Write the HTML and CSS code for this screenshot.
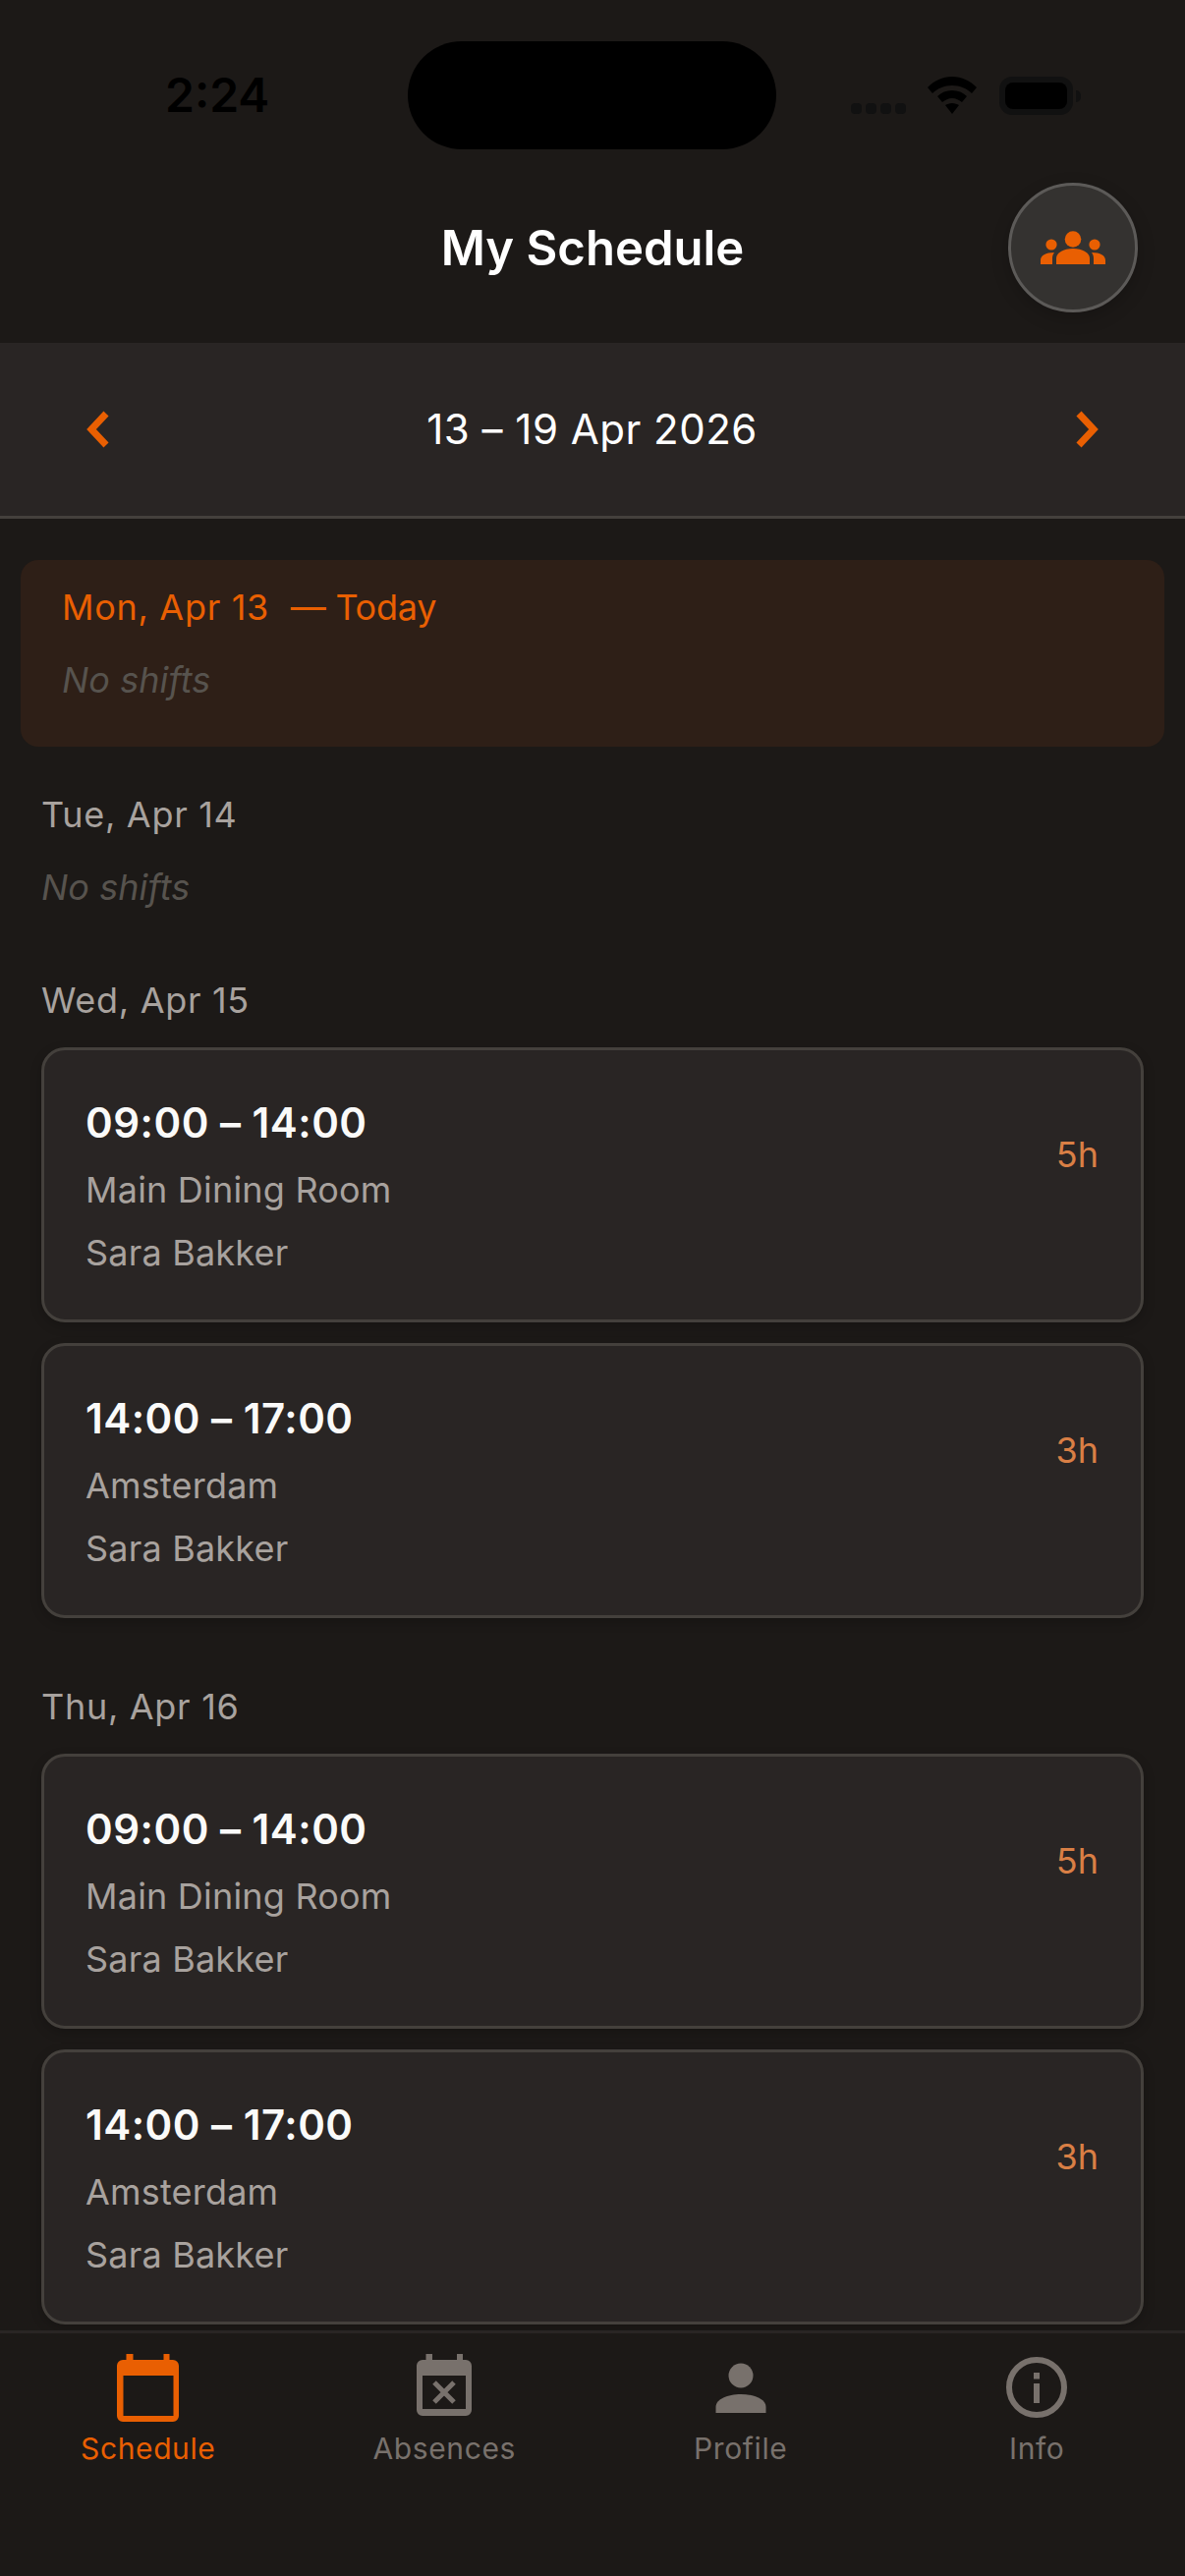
FILE: index.html
```html
<!DOCTYPE html>
<html lang="en">
<head>
    <meta charset="UTF-8">
    <meta name="viewport" content="width=device-width, initial-scale=1.0">
    <title>My Schedule</title>
    <link rel="stylesheet" href="styles.css">
</head>
<body>
    <div class="app">
        <div class="status-bar">
            <span class="status-time">2:24</span>
            <div class="island"></div>
            <div class="status-icons">
                <div class="signal-dots"><i></i><i></i><i></i><i></i></div>
                <svg class="wifi-icon" width="50" height="38" viewBox="0 0 50 38">
                    <path d="M25 0C15 0 7 4 0 11l5 6c5-5 12-8 20-8s15 3 20 8l5-6C43 4 35 0 25 0z"/>
                    <path d="M25 14c-6 0-11 2-15 6l5 6c3-2 6-4 10-4s7 2 10 4l5-6c-4-4-9-6-15-6z"/>
                    <path d="M25 27c-3 0-5 1-7 2l7 9 7-9c-2-1-4-2-7-2z"/>
                </svg>
                <div class="battery"><div class="battery-fill"></div></div>
                <div class="battery-nib"></div>
            </div>
        </div>

        <header class="header">
            <div></div>
            <h1 class="title">My Schedule</h1>
            <button class="team-button">
                <svg width="66" height="34" viewBox="0 0 66 34" fill="#e95f02">
                    <circle cx="33" cy="8.500" r="8.300"/>
                    <circle cx="11" cy="14" r="5.600"/>
                    <circle cx="55" cy="14" r="5.600"/>
                    <path d="M16 34v-6c0-6 8-10 17-10s17 4 17 10v6z"/>
                    <path d="M0 34v-4c0-5 5-8 14-8-1.500 2-2 4-2 6v6z"/>
                    <path d="M66 34v-4c0-5-5-8-14-8 1.500 2 2 4 2 6v6z"/>
                </svg>
            </button>
        </header>

        <div class="week-bar">
            <svg class="chevron" width="32" height="44" viewBox="0 0 32 44">
                <path d="M28 6L13 22l15 16" fill="none" stroke="#e95f02" stroke-width="7"/>
            </svg>
            <span class="week-label">13 – 19 Apr 2026</span>
            <svg class="chevron" width="32" height="44" viewBox="0 0 32 44">
                <path d="M5 6l15 16L5 38" fill="none" stroke="#e95f02" stroke-width="7"/>
            </svg>
        </div>

        <main class="schedule">
            <section class="day day-today">
                <div class="day-label">Mon, Apr 13&nbsp; <span class="today-tag">— Today</span></div>
                <div class="no-shifts">No shifts</div>
            </section>

            <section class="day">
                <div class="day-label">Tue, Apr 14</div>
                <div class="no-shifts">No shifts</div>
            </section>

            <section class="day">
                <div class="day-label">Wed, Apr 15</div>
                <div class="shift-card">
                    <div class="shift-info">
                        <div class="shift-time">09:00 – 14:00</div>
                        <div class="shift-line">Main Dining Room</div>
                        <div class="shift-line">Sara Bakker</div>
                    </div>
                    <div class="shift-hours">5h</div>
                </div>
                <div class="shift-card">
                    <div class="shift-info">
                        <div class="shift-time">14:00 – 17:00</div>
                        <div class="shift-line">Amsterdam</div>
                        <div class="shift-line">Sara Bakker</div>
                    </div>
                    <div class="shift-hours">3h</div>
                </div>
            </section>

            <section class="day">
                <div class="day-label">Thu, Apr 16</div>
                <div class="shift-card">
                    <div class="shift-info">
                        <div class="shift-time">09:00 – 14:00</div>
                        <div class="shift-line">Main Dining Room</div>
                        <div class="shift-line">Sara Bakker</div>
                    </div>
                    <div class="shift-hours">5h</div>
                </div>
                <div class="shift-card">
                    <div class="shift-info">
                        <div class="shift-time">14:00 – 17:00</div>
                        <div class="shift-line">Amsterdam</div>
                        <div class="shift-line">Sara Bakker</div>
                    </div>
                    <div class="shift-hours">3h</div>
                </div>
            </section>
        </main>

        <nav class="tab-bar">
            <div class="tab tab-active">
                <svg class="tab-icon" width="72" height="72" viewBox="0 0 72 72">
                    <path fill-rule="evenodd" d="M13.500 2h7v6h31V2h6v6h3.500a6 6 0 0 1 6 6v51a6 6 0 0 1-6 6h-51a6 6 0 0 1-6-6V14a6 6 0 0 1 6-6h3.500zM10.500 24v41h51V24z"/>
                </svg>
                <span class="tab-label">Schedule</span>
            </div>
            <div class="tab">
                <svg class="tab-icon" width="72" height="72" viewBox="0 0 72 72">
                    <path fill-rule="evenodd" d="M17.500 2h6.500v6h25V2h6v6h3a6 6 0 0 1 6 6v45a6 6 0 0 1-6 6H14a6 6 0 0 1-6-6V14a6 6 0 0 1 6-6h3.500zM14 24v34h44V24z"/>
                    <path d="M26 31l20 20M46 31L26 51" stroke-width="5" fill="none" stroke="#78716c"/>
                </svg>
                <span class="tab-label">Absences</span>
            </div>
            <div class="tab">
                <svg class="tab-icon" width="72" height="72" viewBox="0 0 72 72">
                    <circle cx="36" cy="24" r="12.500"/>
                    <path d="M10.500 62v-6c0-8 12-13 25.500-13s25.500 5 25.500 13v6z"/>
                </svg>
                <span class="tab-label">Profile</span>
            </div>
            <div class="tab">
                <svg class="tab-icon" width="72" height="72" viewBox="0 0 72 72">
                    <circle cx="36" cy="36" r="28" fill="none" stroke="#78716c" stroke-width="6"/>
                    <rect x="33" y="21" width="6" height="6.500"/>
                    <rect x="33" y="32" width="6" height="20"/>
                </svg>
                <span class="tab-label">Info</span>
            </div>
        </nav>
    </div>
</body>
</html>
```

FILE: styles.css
```css
* {
    box-sizing: border-box;
}
body {
    margin: 0;
    padding: 0;
    background-color: #1c1917;
    font-family: Inter, "Liberation Sans", sans-serif;
}
.app {
    display: flex;
    flex-direction: column;
    height: 2622px;
    overflow: hidden;
}

/* status bar */
.status-bar {
    position: relative;
    display: flex;
    justify-content: space-between;
    align-items: flex-start;
    height: 168px;
    padding: 69px 106px 0 168px;
    flex-shrink: 0;
}
.status-time {
    font-size: 48px;
    line-height: 56px;
    font-weight: 600;
    color: #000;
}
.island {
    position: absolute;
    left: 415px;
    top: 42px;
    width: 375px;
    height: 110px;
    border-radius: 55px;
    background-color: #000;
}
.status-icons {
    display: flex;
    align-items: flex-start;
    margin-top: 9px;
}
.signal-dots {
    display: flex;
    gap: 4px;
    margin: 27px 22px 0 0;
}
.signal-dots i {
    width: 11px;
    height: 11px;
    border-radius: 4px;
    background-color: #111;
}
.wifi-icon {
    fill: #000;
    margin-right: 23px;
}
.battery {
    width: 75px;
    height: 39px;
    padding: 6px;
    border-radius: 13px;
    background-color: #111;
}
.battery-fill {
    height: 100%;
    border-radius: 8px;
    background-color: #000;
}
.battery-nib {
    width: 5px;
    height: 12px;
    margin: 14px 0 0 3px;
    border-radius: 0 6px 6px 0;
    background-color: #111;
}

/* header */
.header {
    display: grid;
    grid-template-columns: 1fr auto 1fr;
    align-items: center;
    height: 181px;
    padding: 0 48px 14px;
    flex-shrink: 0;
}
.title {
    margin: 2px 0 0;
    font-size: 49px;
    line-height: 64px;
    font-weight: 600;
    color: #fff;
}
.team-button {
    justify-self: end;
    display: flex;
    justify-content: center;
    align-items: center;
    width: 132px;
    height: 132px;
    padding: 0;
    border: 3px solid #5c5a58;
    border-radius: 50%;
    background-color: #343230;
    box-shadow: 0 6px 18px rgba(0,0,0,0.2);
}

/* week bar */
.week-bar {
    display: flex;
    justify-content: space-between;
    align-items: center;
    height: 179px;
    padding: 0 81px 0 80px;
    background-color: #292524;
    border-bottom: 3px solid #44403c;
    flex-shrink: 0;
}
.week-label {
    font-size: 42px;
    line-height: 56px;
    letter-spacing: 0.5px;
    color: #fff;
}

/* schedule list */
.schedule {
    flex: 1;
    min-height: 0;
    overflow: hidden;
    padding-top: 42px;
}
.day {
    margin: 0 42px 66px;
}
.day-today {
    margin: 0 21px 45px;
    padding: 24px 42px 44px;
    border-radius: 18px;
    background-color: #2e1f17;
}
.day-label {
    margin-bottom: 24px;
    font-size: 36px;
    line-height: 48px;
    letter-spacing: 0.7px;
    color: #a8a29e;
}
.day-today .day-label {
    margin-bottom: 26px;
    color: #e95f02;
}
.today-tag {
    letter-spacing: -0.2px;
}
.no-shifts {
    padding: 2px 0 1px;
    font-size: 36px;
    line-height: 48px;
    font-style: italic;
    letter-spacing: 0.1px;
    color: #57534e;
}
.day-today .no-shifts {
    padding: 0;
}
.shift-card {
    display: flex;
    justify-content: space-between;
    align-items: flex-start;
    height: 280px;
    margin-bottom: 21px;
    padding: 46px 43px 44px 42px;
    background-color: #292524;
    border: 3px solid #44403c;
    border-radius: 24px;
    box-shadow: 0 4px 12px rgba(0,0,0,0.2);
}
.shift-card:last-child {
    margin-bottom: 0;
}
.shift-info {
    display: flex;
    flex-direction: column;
    gap: 16px;
}
.shift-time {
    font-size: 42px;
    line-height: 56px;
    font-weight: 600;
    letter-spacing: 0.5px;
    color: #fafaf9;
}
.shift-line {
    font-size: 36px;
    line-height: 48px;
    letter-spacing: 0.2px;
    color: #a8a29e;
}
.shift-hours {
    margin-top: 36px;
    font-size: 36px;
    line-height: 48px;
    color: #d97f45;
}

/* bottom tabs */
.tab-bar {
    display: grid;
    grid-template-columns: repeat(4, 1fr);
    height: 250px;
    padding-top: 19px;
    border-top: 3px solid #292524;
    background-color: #1c1917;
    flex-shrink: 0;
}
.tab {
    display: flex;
    flex-direction: column;
    align-items: center;
    gap: 6px;
    fill: #78716c;
    color: #78716c;
}
.tab-active {
    fill: #e95f02;
    color: #e95f02;
}
.tab-label {
    font-size: 30px;
    line-height: 40px;
    font-weight: 400;
    letter-spacing: 0.6px;
}
```
